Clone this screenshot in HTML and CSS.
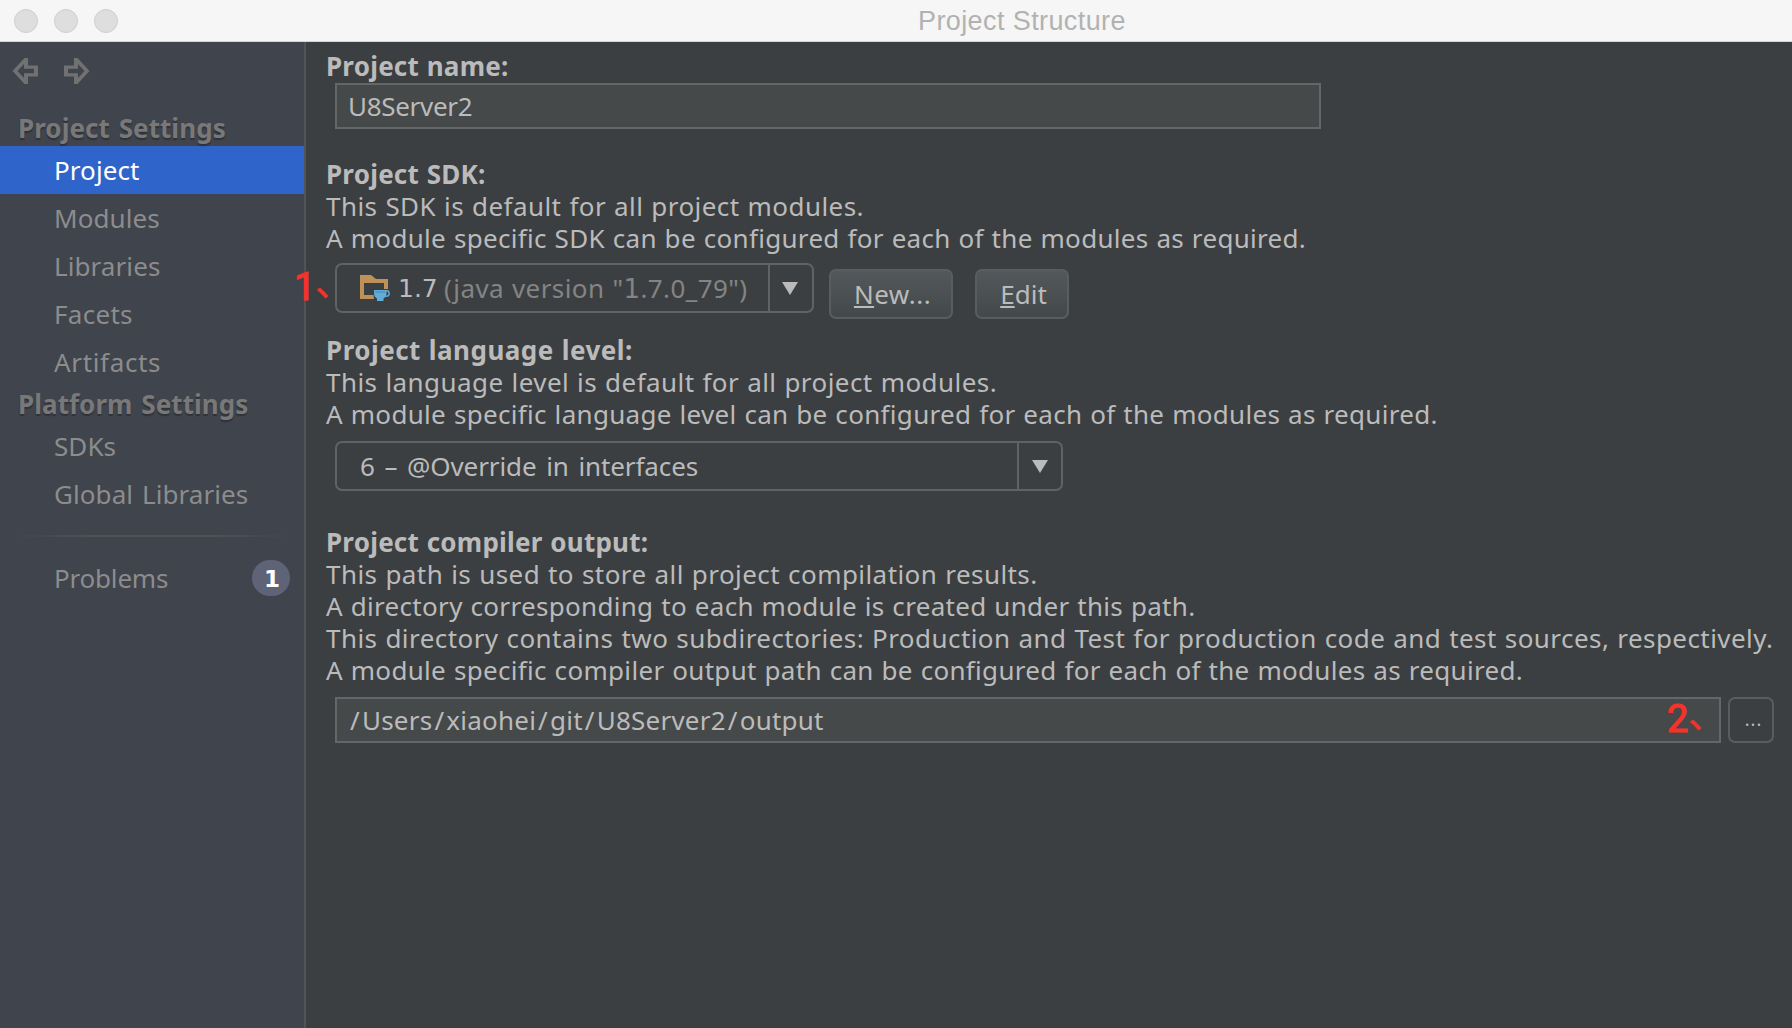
FILE: index.html
```html
<!DOCTYPE html>
<html lang="en">
<head>
<meta charset="utf-8">
<title>Project Structure</title>
<link rel="stylesheet" href="styles.css">
</head>
<body>
<header class="titlebar">
  <div class="lights"><i></i><i></i><i></i></div>
  <h1>Project Structure</h1>
</header>
<div class="window">
  <nav class="sidebar">
    <div class="history">
      <svg width="26" height="28" viewBox="0 0 26 28"><path fill-rule="evenodd" d="M.5 14L12.500 1H16V8.500H26V19.500H16V27H12.500ZM5.500 14L12 21V16.300H22V11.700H12V7Z"/></svg>
      <svg width="26" height="28" viewBox="0 0 26 28"><path fill-rule="evenodd" d="M25.500 14L13.500 1H10V8.500H0V19.500H10V27H13.500ZM20.500 14L14 21V16.300H4V11.700H14V7Z"/></svg>
    </div>
    <h2>Project Settings</h2>
    <a class="item selected">Project</a>
    <a class="item">Modules</a>
    <a class="item">Libraries</a>
    <a class="item facets">Facets</a>
    <a class="item artifacts">Artifacts</a>
    <h2>Platform Settings</h2>
    <a class="item">SDKs</a>
    <a class="item">Global Libraries</a>
    <hr>
    <a class="item problems">Problems<b class="badge">1</b></a>
  </nav>
  <main class="content">
    <section class="name">
      <h3>Project name:</h3>
      <div class="field">U8Server2</div>
    </section>
    <section class="sdk">
      <h3>Project SDK:</h3>
      <p class="loose">This SDK is default for all project modules.</p>
      <p>A module specific SDK can be configured for each of the modules as required.</p>
      <div class="controls">
        <div class="combo">
          <div class="value">
            <svg class="folder" width="31" height="28" viewBox="0 0 31 28"><path fill="#bd9157" fill-rule="evenodd" d="M0 1H11L16 5H28V25H0ZM4 9V21H24V9Z"/><path fill="#3c3f41" d="M13 15H28.500V25H14Z"/><circle cx="26.500" cy="19.500" r="2.700" fill="none" stroke="#5da7d2" stroke-width="1.500"/><path fill="#62add8" d="M14 16H26.500V20Q26 23.500 23.500 24.500V27H17V24.500Q14 23 14 19Z"/><path fill="#4488b0" d="M15 17.500H25.500V18.500H15Z"/></svg>
            <span class="ver">1.7</span><span class="dim">(java version "<span class="one">1</span>.7.0_79")</span>
          </div>
          <div class="arrow"><svg width="16" height="13"><path d="M0 0H16L8 13Z"/></svg></div>
        </div>
        <button class="new"><u>N</u>ew...</button>
        <button class="edit"><u>E</u>dit</button>
      </div>
    </section>
    <section class="level">
      <h3>Project language level:</h3>
      <p class="loose">This language level is default for all project modules.</p>
      <p>A module specific language level can be configured for each of the modules as required.</p>
      <div class="combo">
        <div class="value">6 – @Override in interfaces</div>
        <div class="arrow"><svg width="16" height="13"><path d="M0 0H16L8 13Z"/></svg></div>
      </div>
    </section>
    <section class="output">
      <h3>Project compiler output:</h3>
      <p class="loose">This path is used to store all project compilation results.</p>
      <p>A directory corresponding to each module is created under this path.</p>
      <p class="loose">This directory contains two subdirectories: Production and Test for production code and test sources, respectively.</p>
      <p>A module specific compiler output path can be configured for each of the modules as required.</p>
      <div class="path">
        <div class="field"><i>/</i>Users<i>/</i>xiaohei<i>/</i>git<i>/</i>U8Server2<i>/</i>output</div>
        <button class="browse">...</button>
      </div>
    </section>
  </main>
</div>
<div class="note note-one">1<span>、</span></div>
<div class="note note-two">2<span>、</span></div>
</body>
</html>
```
FILE: styles.css
```css
* { box-sizing: border-box; }
body { margin: 0; width: 1792px; height: 1028px; overflow: hidden; background: #3c3f41; color: #bbb; font: 26px/32px "Noto Sans", sans-serif; display: flex; flex-direction: column; }
h1, h2, h3, p { margin: 0; font-size: 26px; white-space: nowrap; }
.titlebar { height: 42px; background: #f6f6f6; border-bottom: 1px solid #d5d5d5; display: grid; grid-template-columns: 918px 1fr; align-items: center; }
.lights { display: flex; gap: 16px; padding-left: 14px; }
.lights i { width: 24px; height: 24px; border-radius: 50%; background: #dedede; border: 1px solid #cfcfcf; }
.titlebar h1 { font: 27px/40px "Liberation Sans", sans-serif; letter-spacing: 0.4px; color: #b2b2b2; }
.window { flex: 1; display: flex; }

.sidebar { flex: none; width: 306px; background: #40444d; border-right: 2px solid #515356; color: #8c8c8c; word-spacing: 2px; }
.history { height: 68px; padding: 15px 0 0 12px; display: flex; gap: 26px; }
.history path { fill: #717171; }
.sidebar h2 { height: 36px; line-height: 36px; padding-left: 18px; color: #787878; letter-spacing: 0.06px; text-shadow: 0 2px 1px #303238; }
.item { display: flex; align-items: center; height: 48px; padding-left: 54px; white-space: nowrap; letter-spacing: 0.08px; }
.facets { letter-spacing: 0.3px; }
.artifacts { letter-spacing: 0.65px; }
.problems { letter-spacing: -0.2px; }
.selected { background: #2f65ca; color: #fff; }
.sidebar hr { height: 2px; margin: 17px 14px; border: 0; background: linear-gradient(90deg, transparent, #505257 30%, #505257 70%, transparent); }
.badge { width: 38px; height: 36px; margin: 0 14px 0 auto; padding-left: 2px; border-radius: 18px; background: #5e6377; color: #fff; font: bold 23px/38px "DejaVu Sans", sans-serif; text-align: center; }

.content { flex: 1; min-width: 0; padding: 8px 18px 0 20px; word-spacing: 0.75px; }
.content h3 { letter-spacing: 0.22px; }
.level h3 { letter-spacing: 0.48px; }
.content p { letter-spacing: 0.31px; }
.content p.loose { letter-spacing: 0.44px; }
.content section > .combo, .content .controls, .content .path, .name .field { margin-left: 9px; }
.field { height: 46px; border: 2px solid #646667; background: #45494a; padding-left: 12px; line-height: 43px; white-space: nowrap; }
.name { height: 108px; }
.name .field { width: 986px; margin-top: 1px; padding-left: 11px; letter-spacing: -0.3px; }
.sdk { height: 176px; }
.controls { display: flex; margin-top: 9px; }
.combo { height: 50px; border: 2px solid #606264; border-radius: 7px; display: flex; }
.combo .value { flex: 1; display: flex; align-items: center; padding-left: 23px; white-space: nowrap; }
.combo .arrow { width: 44px; border-left: 2px solid #606264; display: grid; place-items: center; }
.arrow path { fill: #bbb; }
.controls .combo { width: 479px; }
.controls .arrow { padding-right: 2px; }
.folder { margin-right: 7px; }
.ver { width: 46px; padding-top: 2px; font: 25px/32px "DejaVu Sans", sans-serif; }
.dim { color: #848484; letter-spacing: 0.42px; }
.one { font-family: "DejaVu Sans", sans-serif; }
button { height: 50px; margin: 6px 0 0; padding: 0; border: 2px solid #5a5d5f; border-radius: 7px; background: linear-gradient(#53585a, #43484a); color: #bbb; font: inherit; }
.new { width: 124px; margin-left: 15px; padding-left: 3px; letter-spacing: 0.5px; }
.edit { width: 94px; margin-left: 22px; padding-left: 3px; }
.level { height: 192px; }
.level .combo { width: 728px; margin-top: 11px; }
.level .value { word-spacing: 3px; letter-spacing: -0.1px; }
.path { display: flex; gap: 7px; margin-top: 11px; }
.path .field { width: 1386px; padding-left: 11px; letter-spacing: 0.23px; }
.path .field i { font-style: normal; margin: 0 2px; }
.path .browse { flex: none; width: 46px; height: 46px; margin: 0; padding: 0 0 3px 5px; background: #3c3f41; font-size: 18px; letter-spacing: 1px; }

.note { position: absolute; display: flex; color: #f8312b; font: 38px/38px Roboto, sans-serif; -webkit-text-stroke: 1.2px #f8312b; white-space: nowrap; }
.note span { font: 36px/24px "Noto Sans CJK SC", sans-serif; -webkit-text-stroke-width: 0.5px; }
.note-one { left: 294px; top: 268px; }
.note-two { left: 1667px; top: 700px; }
```
